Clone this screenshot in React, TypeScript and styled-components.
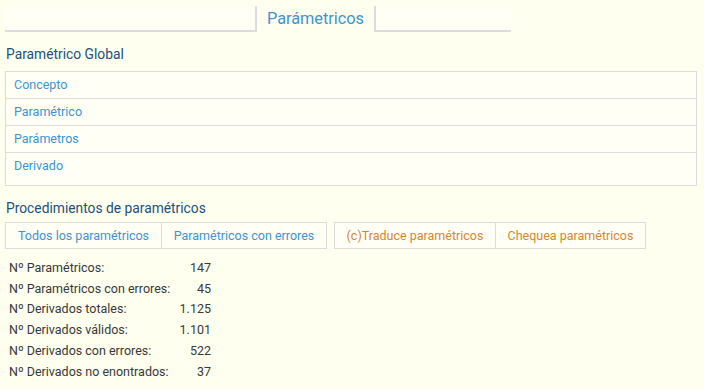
import React from "react";
import styled, { createGlobalStyle } from "styled-components";

const Global = createGlobalStyle`
  html, body { margin: 0; padding: 0; background: #fffff0; }
  body { font-family: Roboto, "Noto Sans", Arial, sans-serif; }
`;

const Page = styled.div`
  padding: 6px 7px 0 5px;
  width: 704px;
  box-sizing: border-box;
`;

const TabBar = styled.div`
  display: flex;
  align-items: stretch;
  height: 26px;
`;

const Tab = styled.div<{ $w: number; $active?: boolean }>`
  width: ${(p) => p.$w}px;
  box-sizing: border-box;
  border-bottom: ${(p) => (p.$active ? "none" : "2px solid #dcdcdc")};
  border-right: ${(p) => (p.$active ? "2px solid #dcdcdc" : "none")};
  background: ${(p) => (p.$active ? "transparent" : "#fffff6")};
  color: #3a95d2;
  font-size: 16.3px;
  display: flex;
  align-items: center;
  justify-content: center;
  padding-bottom: 1px;
`;

const LeftTab = styled(Tab)`
  border-right: 2px solid #dcdcdc;
`;

const SectionTitle = styled.div<{ $mt: number }>`
  margin-top: ${(p) => p.$mt}px;
  margin-left: 1px;
  font-size: 13.8px;
  color: #1d5079;
  line-height: 18px;
`;

const Table = styled.div`
  margin-top: 8px;
  border: 1px solid #dcdcdc;
  background: #fffff6;
  display: flex;
  flex-direction: column;
`;

const Row = styled.div<{ $h: number }>`
  height: ${(p) => p.$h}px;
  box-sizing: border-box;
  padding: 5px 8px 0;
  font-size: 12.5px;
  color: #3a95d2;
  & + & { border-top: 1px solid #dcdcdc; }
`;

const Buttons = styled.div`
  display: flex;
  margin-top: 5px;
`;

const Group = styled.div`
  display: flex;
  & + & { margin-left: 7px; }
`;

const Btn = styled.button<{ $w: number; $orange?: boolean }>`
  width: ${(p) => p.$w}px;
  height: 27px;
  background: #fffff6;
  border: 1px solid #dcdcdc;
  font-family: Roboto, "Noto Sans", Arial, sans-serif;
  font-size: 12.5px;
  color: ${(p) => (p.$orange ? "#d9862c" : "#3a95d2")};
  padding: 0;
  & + & { border-left: 1px solid #dcdcdc; margin-left: -1px; }
`;

const Stats = styled.div`
  margin-top: 8px;
  margin-left: 4px;
  display: grid;
  grid-template-columns: 165px 37px;
  grid-auto-rows: 20.8px;
  align-items: center;
  font-size: 12.5px;
  color: #383838;
  white-space: nowrap;
`;

const Label = styled.span``;
const Value = styled.span`
  text-align: right;
`;

const stats: [string, string][] = [
  ["Nº Paramétricos:", "147"],
  ["Nº Paramétricos con errores:", "45"],
  ["Nº Derivados totales:", "1.125"],
  ["Nº Derivados válidos:", "1.101"],
  ["Nº Derivados con errores:", "522"],
  ["Nº Derivados no enontrados:", "37"],
];

export default function App() {
  return (
    <Page>
      <Global />
      <TabBar>
        <LeftTab $w={252} />
        <Tab $w={119} $active>Parámetricos</Tab>
        <Tab $w={135} />
      </TabBar>
      <SectionTitle $mt={13}>Paramétrico Global</SectionTitle>
      <Table>
        <Row $h={26}>Concepto</Row>
        <Row $h={27}>Paramétrico</Row>
        <Row $h={27}>Parámetros</Row>
        <Row $h={33}>Derivado</Row>
      </Table>
      <SectionTitle $mt={13}>Procedimientos de paramétricos</SectionTitle>
      <Buttons>
        <Group>
          <Btn $w={157}>Todos los paramétricos</Btn>
          <Btn $w={166}>Paramétricos con errores</Btn>
        </Group>
        <Group>
          <Btn $w={162} $orange>(c)Traduce paramétricos</Btn>
          <Btn $w={151} $orange>Chequea paramétricos</Btn>
        </Group>
      </Buttons>
      <Stats>
        {stats.map(([l, v]) => (
          <React.Fragment key={l}>
            <Label>{l}</Label>
            <Value>{v}</Value>
          </React.Fragment>
        ))}
      </Stats>
    </Page>
  );
}
